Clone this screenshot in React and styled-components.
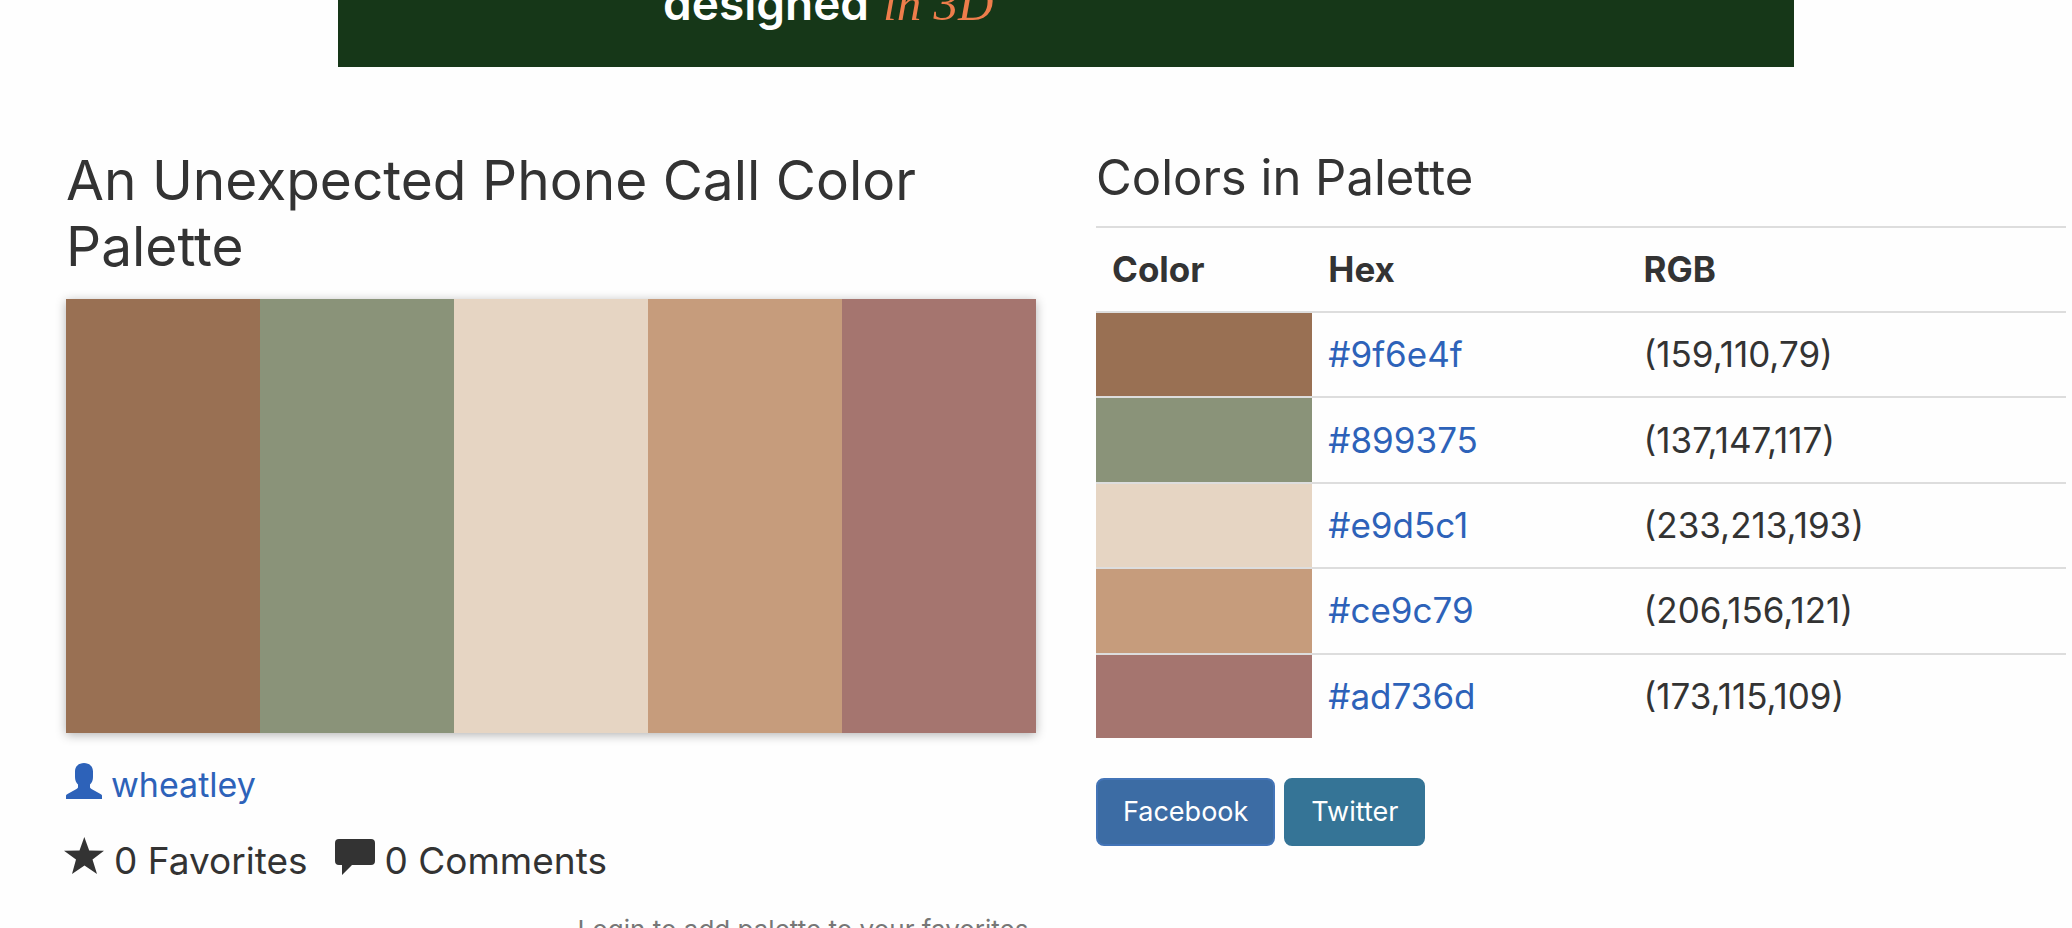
import React from "react";
import styled, { createGlobalStyle } from "styled-components";

const GlobalStyle = createGlobalStyle`
  * { box-sizing: border-box; }
  body {
    margin: 0;
    background: #fefefe;
    color: #333;
    font-family: Inter, "Liberation Sans", sans-serif;
    font-size: 35px;
    line-height: 51px;
    overflow: hidden;
  }
`;

const Page = styled.div`
  padding: 0 6px 0 66px;
`;

const Banner = styled.a`
  display: flex;
  align-items: flex-end;
  gap: 14px;
  width: 100%;
  max-width: 1456px;
  height: 67px;
  margin: 0 auto 80px;
  padding: 0 0 38px 325px;
  overflow: hidden;
  background: #163718;
  color: #fff;
  font-size: 46px;
  font-weight: 600;
  line-height: 51px;
  text-decoration: none;
`;

const BannerAccent = styled.em`
  color: #ed7d4b;
  font-family: "Liberation Serif", serif;
  font-size: 49px;
  font-weight: 400;
`;

const Columns = styled.main`
  display: grid;
  grid-template-columns: 1fr 1fr;
  gap: 60px;
`;

const Column = styled.section`
  min-width: 0;
`;

const Title = styled.h1`
  margin: 0 0 20px;
  font-size: 55px;
  font-weight: 400;
  line-height: 66px;
`;

const Subtitle = styled.h2`
  margin: 0 0 17px;
  font-size: 49px;
  font-weight: 400;
  line-height: 62px;
`;

const Palette = styled.div`
  display: flex;
  height: 434px;
  box-shadow: 0 2px 10px rgba(0, 0, 0, 0.3);
`;

const Swatch = styled.div`
  flex: 1;
  background: ${(p) => p.$color};
`;

const Author = styled.a`
  display: flex;
  align-items: center;
  gap: 9px;
  width: fit-content;
  margin-top: 26px;
  color: #2d62b9;
  font-size: 34px;
  text-decoration: none;
`;

const Stats = styled.div`
  display: flex;
  gap: 27px;
  margin: 25px 0 0 -2px;
  font-size: 37px;
`;

const Stat = styled.span`
  display: flex;
  align-items: center;
  gap: 10px;
`;

const Icon = styled.svg`
  width: ${(p) => p.$size}px;
  height: ${(p) => p.$size}px;
  margin-bottom: 8px;
  flex: none;
  fill: currentColor;
`;

const LoginNote = styled.p`
  margin: 24px 0 0;
  color: #777;
  font-size: 26px;
  line-height: 40px;
  text-align: right;
`;

const ColorTable = styled.table`
  width: 100%;
  height: 512px;
  border-collapse: collapse;
  table-layout: fixed;
`;

const HeadCell = styled.th`
  width: ${(p) => p.$width};
  padding: 16px;
  border-top: 2px solid #ddd;
  font-weight: 700;
  text-align: left;
`;

const Cell = styled.td`
  padding: 16px;
  border-top: 2px solid #ddd;
  background: ${(p) => p.$color || "none"};
`;

const HexLink = styled.a`
  color: #2d62b9;
  text-decoration: none;
`;

const ShareRow = styled.div`
  display: flex;
  gap: 9px;
  margin-top: 40px;
`;

const ShareButton = styled.button`
  padding: 8px 25px;
  border: 2px solid ${(p) => p.$border};
  border-radius: 8px;
  background: ${(p) => p.$color};
  color: #fff;
  font-family: inherit;
  font-size: 27px;
  line-height: 48px;
`;

const colors = [
  { hex: "#9f6e4f", rgb: "(159,110,79)", shown: "#997053" },
  { hex: "#899375", rgb: "(137,147,117)", shown: "#8a9379" },
  { hex: "#e9d5c1", rgb: "(233,213,193)", shown: "#e6d5c3" },
  { hex: "#ce9c79", rgb: "(206,156,121)", shown: "#c69c7c" },
  { hex: "#ad736d", rgb: "(173,115,109)", shown: "#a5756f" },
];

function UserIcon() {
  return (
    <Icon $size={36} viewBox="0 0 36 36" aria-hidden="true">
      <path d="M18 0C12.500 0 9 3.500 9 8.500V14C9 17 10 19.500 12 21.500V24C12 25 11.500 25.300 10.500 26L1.500 31C.5 31.600 0 32 0 33V36H36V33C36 32 35.500 31.600 34.500 31L25.500 26C24.500 25.300 24 25 24 24V21.500C26 19.500 27 17 27 14V8.500C27 3.500 23.500 0 18 0Z" />
    </Icon>
  );
}

function StarIcon() {
  return (
    <Icon $size={40} viewBox="0 0 40 40" aria-hidden="true">
      <path d="M20.300 0L25.200 13.500L40 13.700L28.500 22.500L33 37L20.500 28.500L8 37L12 22.500L0 13.700L15.500 13.500Z" />
    </Icon>
  );
}

function CommentIcon() {
  return (
    <Icon $size={40} viewBox="0 0 40 40" aria-hidden="true">
      <path d="M4 2H36Q40 2 40 6V24Q40 28 36 28H17L7 38V28H4Q0 28 0 24V6Q0 2 4 2Z" />
    </Icon>
  );
}

export default function App() {
  return (
    <>
      <GlobalStyle />
      <Page>
        <Banner href="#sponsor">
          <span>designed</span>
          <BannerAccent>in 3D</BannerAccent>
        </Banner>
        <Columns>
          <Column>
            <Title>An Unexpected Phone Call Color Palette</Title>
            <Palette>
              {colors.map((c) => (
                <Swatch key={c.hex} $color={c.shown} />
              ))}
            </Palette>
            <Author href="#wheatley">
              <UserIcon />
              wheatley
            </Author>
            <Stats>
              <Stat>
                <StarIcon />0 Favorites
              </Stat>
              <Stat>
                <CommentIcon />0 Comments
              </Stat>
            </Stats>
            <LoginNote>Login to add palette to your favorites.</LoginNote>
          </Column>
          <Column>
            <Subtitle>Colors in Palette</Subtitle>
            <ColorTable>
              <thead>
                <tr>
                  <HeadCell $width="22.3%">Color</HeadCell>
                  <HeadCell $width="32.5%">Hex</HeadCell>
                  <HeadCell>RGB</HeadCell>
                </tr>
              </thead>
              <tbody>
                {colors.map((c) => (
                  <tr key={c.hex}>
                    <Cell $color={c.shown} />
                    <Cell>
                      <HexLink href={c.hex}>{c.hex}</HexLink>
                    </Cell>
                    <Cell>{c.rgb}</Cell>
                  </tr>
                ))}
              </tbody>
            </ColorTable>
            <ShareRow>
              <ShareButton $color="#3c6ca4" $border="#4374b7">Facebook</ShareButton>
              <ShareButton $color="#357496" $border="#357496">Twitter</ShareButton>
            </ShareRow>
          </Column>
        </Columns>
      </Page>
    </>
  );
}
